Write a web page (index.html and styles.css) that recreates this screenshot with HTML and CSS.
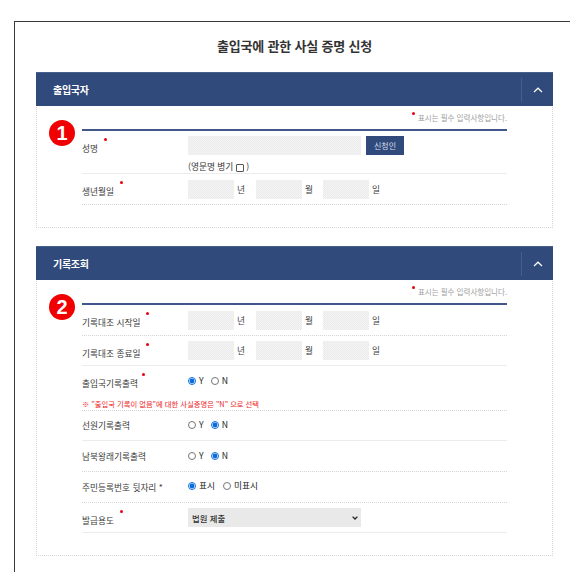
FILE: index.html
```html
<!DOCTYPE html>
<html lang="ko">
<head>
<meta charset="utf-8">
<title>출입국에 관한 사실 증명 신청</title>
<link rel="stylesheet" href="styles.css">
</head>
<body>
<main class="frame">
  <h1 class="title">출입국에 관한 사실 증명 신청</h1>

  <section class="panel panel-first">
    <header class="panel-head">
      <h2>출입국자</h2>
      <span class="toggle"><svg width="10" height="6" viewBox="0 0 10 6"><path d="M1 5L5 1.2 9 5" fill="none" stroke="#fff" stroke-width="1.2"/></svg></span>
    </header>
    <div class="panel-body">
      <p class="note"><i class="dot note-dot"></i>표시는 필수 입력사항입니다.</p>
      <div class="form">
        <span class="badge">1</span>
        <div class="row row-name">
          <div class="row-main">
            <span class="label">성명<i class="dot"></i></span>
            <div class="field">
              <input class="input wide" type="text">
              <button class="btn" type="button">신청인</button>
            </div>
          </div>
          <div class="sub">(영문명 병기<input class="check" type="checkbox">)</div>
        </div>
        <div class="row row-birth dotted">
          <span class="label">생년월일<i class="dot"></i></span>
          <div class="field date">
            <input class="input short" type="text"><span class="unit">년</span>
            <input class="input short" type="text"><span class="unit">월</span>
            <input class="input short" type="text"><span class="unit">일</span>
          </div>
        </div>
      </div>
    </div>
  </section>

  <section class="panel panel-second">
    <header class="panel-head">
      <h2>기록조회</h2>
      <span class="toggle"><svg width="10" height="6" viewBox="0 0 10 6"><path d="M1 5L5 1.2 9 5" fill="none" stroke="#fff" stroke-width="1.2"/></svg></span>
    </header>
    <div class="panel-body">
      <p class="note"><i class="dot note-dot"></i>표시는 필수 입력사항입니다.</p>
      <div class="form">
        <span class="badge">2</span>
        <div class="row r30 dotted">
          <span class="label">기록대조 시작일<i class="dot"></i></span>
          <div class="field date">
            <input class="input short" type="text"><span class="unit">년</span>
            <input class="input short" type="text"><span class="unit">월</span>
            <input class="input short" type="text"><span class="unit">일</span>
          </div>
        </div>
        <div class="row r30">
          <span class="label">기록대조 종료일<i class="dot"></i></span>
          <div class="field date">
            <input class="input short" type="text"><span class="unit">년</span>
            <input class="input short" type="text"><span class="unit">월</span>
            <input class="input short" type="text"><span class="unit">일</span>
          </div>
        </div>
        <div class="row row-note dotted">
          <div class="row-main radio-main">
            <span class="label">출입국기록출력<i class="dot dot-near"></i></span>
            <div class="field">
              <label class="opt"><input type="radio" name="a" checked>Y</label>
              <label class="opt"><input type="radio" name="a">N</label>
            </div>
          </div>
          <p class="warn">※ "출입국 기록이 없음"에 대한 사실증명은 "N" 으로 선택</p>
        </div>
        <div class="row r30">
          <span class="label">선원기록출력</span>
          <div class="field">
            <label class="opt"><input type="radio" name="b">Y</label>
            <label class="opt"><input type="radio" name="b" checked>N</label>
          </div>
        </div>
        <div class="row r31 dotted">
          <span class="label">남북왕래기록출력</span>
          <div class="field">
            <label class="opt"><input type="radio" name="c">Y</label>
            <label class="opt"><input type="radio" name="c" checked>N</label>
          </div>
        </div>
        <div class="row r31 dotted">
          <span class="label">주민등록번호 뒷자리 *</span>
          <div class="field">
            <label class="opt opt-wide"><input type="radio" name="d" checked>표시</label>
            <label class="opt opt-high"><input type="radio" name="d">미표시</label>
          </div>
        </div>
        <div class="row r30">
          <span class="label">발급용도<i class="dot"></i></span>
          <div class="field">
            <select class="input wide select"><option>법원 제출</option></select>
          </div>
        </div>
      </div>
    </div>
  </section>
</main>
</body>
</html>
```
FILE: styles.css
```css
* { box-sizing: border-box; }
html, body { margin: 0; padding: 0; background: #fff; }
body {
  width: 570px;
  height: 572px;
  overflow: hidden;
  font-family: "Noto Sans CJK KR", "Noto Sans", sans-serif;
  color: #3f3f3f;
}
.frame {
  margin: 21px 0 0 14px;
  height: 551px;
  padding: 0 17px 0 21px;
  border-left: 1px solid #3a3a3a;
  border-top: 1px solid #3a3a3a;
}
.title {
  margin: 0;
  height: 50px;
  line-height: 47px;
  font-size: 13px;
  font-weight: 700;
  color: #333;
  text-align: center;
  letter-spacing: -0.2px;
}
.panel {
  border: 1px dotted #d6d6d6;
  border-top: 0;
}
.panel-first { height: 156px; }
.panel-second { height: 310px; margin-top: 18px; }
.panel-head {
  height: 34px;
  margin: 0 -1px;
  background: #2f4a7b;
  border-top: 1px solid #47608c;
  display: flex;
  align-items: center;
  justify-content: space-between;
  color: #fff;
}
.panel-head h2 {
  margin: 0 0 0 17px;
  font-size: 10px;
  font-weight: 700;
  letter-spacing: -0.3px;
}
.toggle {
  width: 32px;
  height: 24px;
  border-left: 1px solid #46608e;
  display: flex;
  align-items: center;
  justify-content: center;
}
.panel-body { padding: 0 45px; }
.note {
  margin: 0;
  height: 23px;
  padding-top: 5px;
  font-size: 7.5px;
  line-height: 13px;
  color: #a0a0a0;
  text-align: right;
  white-space: nowrap;
}
.dot {
  display: inline-block;
  width: 3px;
  height: 3px;
  border-radius: 50%;
  background: #e60012;
  margin-left: 6px;
  vertical-align: 11px;
}
.dot-near { margin-left: 4px; }
.note-dot { margin: 0 3px 0 0; vertical-align: 6px; }
.form {
  position: relative;
  border-top: 2px solid #43588a;
}
.badge {
  position: absolute;
  left: -33px;
  top: -11px;
  width: 26px;
  height: 26px;
  border-radius: 50%;
  background: #f00000;
  color: #fff;
  font: 700 20px/26px "Liberation Sans", sans-serif;
  text-align: center;
}
.row {
  display: flex;
  align-items: center;
  border-bottom: 1px solid #ececec;
  font-size: 8.7px;
}
.dotted { border-bottom: 1px dotted #d4d4d4; }
.row-main { display: flex; align-items: center; }
.label {
  width: 106px;
  flex: none;
  line-height: 12px;
  padding-top: 1px;
  white-space: nowrap;
  color: #3a3a3a;
}
.field { display: flex; align-items: center; }
.input {
  height: 19px;
  padding: 0;
  border: 0;
  background-color: #efefef;
  background-image: repeating-conic-gradient(#f4f4f4 0 25%, #ebebeb 0 50%);
  background-size: 2px 2px;
  display: block;
}
.wide { width: 173px; }
.short { width: 46px; }
.unit { width: 22px; flex: none; padding-left: 3px; }
.unit:nth-of-type(2) { width: 21px; }
.btn {
  width: 38px;
  height: 19px;
  margin-left: 5px;
  padding: 0;
  border: 0;
  background: #2f4a7b;
  color: #d5dcea;
  font: 400 8px "Noto Sans CJK KR", sans-serif;
}
.row-name { display: block; height: 43px; padding-top: 5px; }
.sub {
  margin: 4px 0 0 106px;
  height: 16px;
  line-height: 16px;
  display: flex;
  align-items: center;
  color: #333;
}
.check {
  appearance: none;
  width: 8px;
  height: 8px;
  margin: 2px 2px 0 3px;
  border: 1px solid #555;
  border-radius: 1px;
  background: #fff;
}
.row-birth { height: 31px; }
.r30 { height: 30px; }
.r31 { height: 31px; }
.badge + .r30 { height: 31px; }
.row-note { display: block; height: 45px; }
.radio-main { height: 30px; }
.opt {
  display: flex;
  align-items: center;
  margin: 0 7px 2px 0;
  font-weight: 400;
  color: #222;
}
.opt-wide { margin: 0 8px 4px 0; }
.opt-high { margin-bottom: 4px; }
.opt input {
  width: 8px;
  height: 8px;
  margin: 1px 3px 0 0;
  accent-color: #0a6cdc;
}
.warn {
  margin: 2px 0 0;
  height: 12px;
  line-height: 13px;
  font-size: 7.3px;
  color: #ee1c25;
  white-space: nowrap;
}
.select {
  appearance: none;
  padding-left: 4px;
  font: 500 8.4px "Noto Sans CJK KR", sans-serif;
  color: #333;
  background-color: #e9e9e9;
  background-image: url("data:image/svg+xml,%3Csvg xmlns='http://www.w3.org/2000/svg' width='6' height='4'%3E%3Cpath d='M.6.6L3 3 5.4.6' fill='none' stroke='%23222' stroke-width='1.3'/%3E%3C/svg%3E");
  background-repeat: no-repeat;
  background-size: 6px 4px;
  background-position: 164px 8px;
}
```
